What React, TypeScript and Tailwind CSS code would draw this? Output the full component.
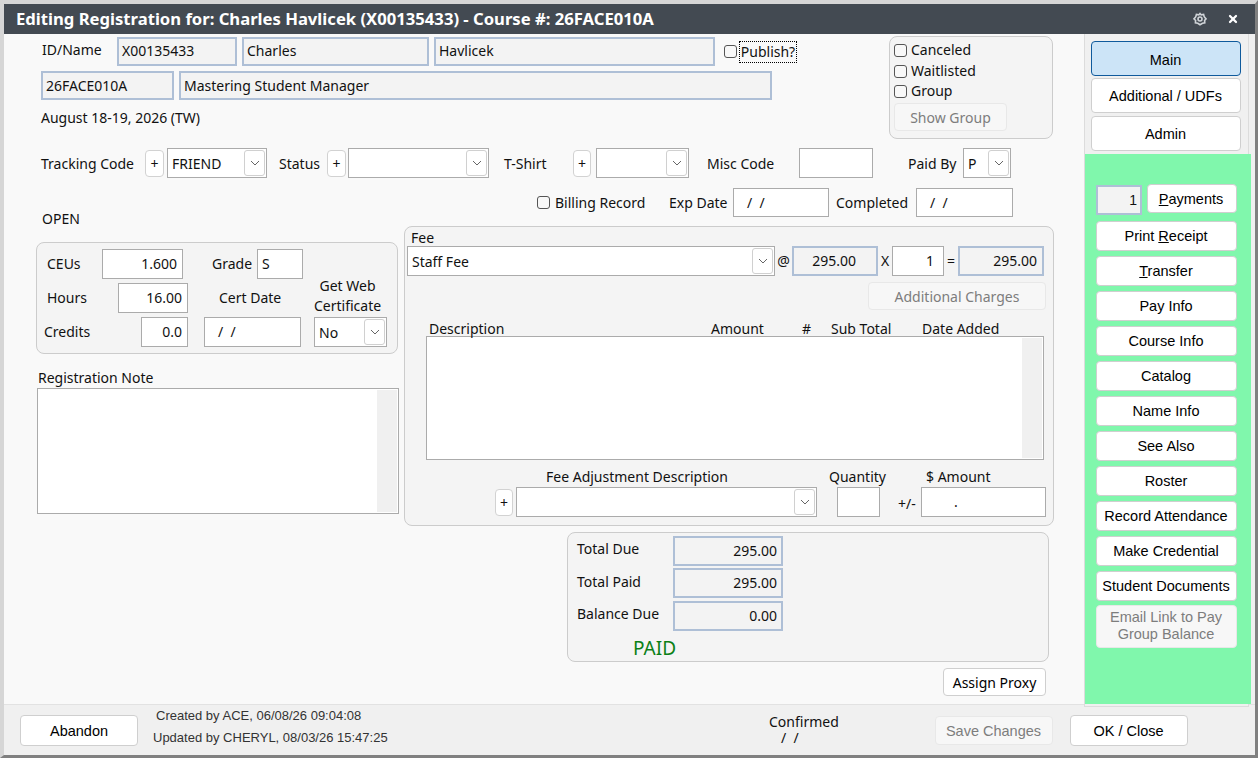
import type { ReactNode } from "react";
import { X } from "lucide-react";

const arial = "font-['Liberation_Sans',Arial,sans-serif]";

function Field({
  className = "",
  height = "h-[30px]",
  locked,
  right,
  children,
}: {
  className?: string;
  height?: string;
  locked?: boolean;
  right?: boolean;
  children?: ReactNode;
}) {
  return (
    <div
      className={`flex shrink-0 items-center whitespace-pre ${height} ${right ? "justify-end" : ""} ${
        locked ? "border-2 border-[#aebfd6] bg-[#f3f3f3] px-[3px]" : "border border-[#ababab] bg-white px-[4px]"
      } ${right && !locked ? "pr-[5px]" : ""} ${className}`}
    >
      {children}
    </div>
  );
}

function Select({ className = "", value }: { className?: string; value?: string }) {
  return (
    <div className={`flex h-[30px] shrink-0 items-center justify-between border border-[#ababab] bg-white pl-[4px] pr-[1px] ${className}`}>
      <span className="pt-[1px]">{value}</span>
      <div className="flex h-[26px] w-[21px] items-center justify-center rounded-[3px] border border-[#d0d0d0] bg-white">
        <svg width="10" height="6" viewBox="0 0 10 6" fill="none" stroke="#666" strokeWidth="1">
          <path d="M1 1l4 4 4-4" />
        </svg>
      </div>
    </div>
  );
}

function Plus({ className = "w-[19px]" }: { className?: string }) {
  return (
    <div className={`mt-[1px] flex h-[27px] shrink-0 items-center justify-center rounded-[4px] border border-[#d2d2d2] bg-white ${className}`}>+</div>
  );
}

function Check() {
  return <div className="h-[13px] w-[13px] shrink-0 rounded-[3px] border border-[#555] bg-[#f8f8f8]" />;
}

function Btn({
  className = "",
  disabled,
  active,
  children,
}: {
  className?: string;
  disabled?: boolean;
  active?: boolean;
  children: ReactNode;
}) {
  const look = active
    ? "border-[#0f5a9c] bg-[#cce4f7] text-black"
    : disabled
      ? "border-[#e8e8e8] bg-[#f7f7f7] text-[#7d7d7d]"
      : "border-[#cfcfcf] bg-white text-black";
  return <div className={`flex shrink-0 items-center justify-center rounded-[4px] border text-center ${look} ${className}`}>{children}</div>;
}

function SideBtn({ children, disabled, className = "h-[30px]" }: { children: ReactNode; disabled?: boolean; className?: string }) {
  return (
    <Btn disabled={disabled} className={`w-[141px] pr-[1px] ${arial} text-[14.5px] leading-[17px] ${className}`}>
      {children}
    </Btn>
  );
}

function Scrollbar() {
  return <div className="h-full w-[20px] bg-[#f0f0f0]" />;
}

export default function App() {
  const sideButtons = ["Pay Info", "Course Info", "Catalog", "Name Info", "See Also", "Roster", "Record Attendance", "Make Credential", "Student Documents"];

  return (
    <div className="flex h-[758px] w-[1258px] flex-col overflow-hidden border-b-[3px] border-l-4 border-r-[3px] border-t-4 border-b-[#808080] border-l-[#d6d6d6] border-r-[#808080] border-t-[#d6d6d6] bg-[#f0f0f0] font-['Noto_Sans',sans-serif] text-[14px] leading-[20px] text-[#111]">
      {/* title bar */}
      <div className="flex h-[30px] shrink-0 items-center justify-between bg-[#434a52] pl-[12px] pr-[16px] text-white">
        <span className="text-[16.65px] font-bold">Editing Registration for: Charles Havlicek (X00135433) - Course #: 26FACE010A</span>
        <div className="flex items-center gap-[20px]">
          <svg width="14" height="14" viewBox="0 0 14 14" fill="none" stroke="#d0d4d8" strokeWidth="1.6">
            <path d="M7 1.5l1.2 1.4 2.4-.4.6 2.2L13 6.9l-1.4 1.6.2 2.3-2.3.5L7 12.7l-2.2-1.4-2.4-.5.2-2.3L1 6.9l1.8-2.2.6-2.2 2.4.4z" />
            <circle cx="7" cy="7" r="2" />
          </svg>
          <X size={12} strokeWidth={4.5} />
        </div>
      </div>

      <div className="flex h-[670px] shrink-0">
        {/* form */}
        <div className="w-[1080px] shrink-0 bg-[#f9f9f9] pt-[2px]">
          <div className="flex h-[103px]">
            <div className="w-[885px] shrink-0">
              <div className="mt-[1px] flex items-center">
                <span className="w-[113px] pb-[4px] pl-[38px]">ID/Name</span>
                <Field locked height="h-[29px]" className="w-[120px] pb-[1px]">X00135433</Field>
                <Field locked height="h-[29px]" className="ml-[5px] w-[187px] pb-[1px]">Charles</Field>
                <Field locked height="h-[29px]" className="ml-[5px] w-[281px] pb-[1px]">Havlicek</Field>
                <div className="ml-[9px]"><Check /></div>
                <div className="ml-[2px] flex h-[22px] w-[58px] items-center justify-center border border-dotted border-black">Publish?</div>
              </div>
              <div className="mt-[5px] flex pl-[37px]">
                <Field locked height="h-[29px]" className="w-[133px]">26FACE010A</Field>
                <Field locked height="h-[29px]" className="ml-[5px] w-[593px]">Mastering Student Manager</Field>
              </div>
              <div className="mt-[8px] pl-[37px]">August 18-19, 2026 (TW)</div>
            </div>
            <div className="h-[103px] w-[164px] shrink-0 rounded-lg border border-[#cccccc] bg-[#f4f4f4] pl-[4px] pt-[3px]">
              <div className="flex h-[20px] items-center gap-[4px]"><Check /><span>Canceled</span></div>
              <div className="mt-[1px] flex h-[20px] items-center gap-[4px]"><Check /><span>Waitlisted</span></div>
              <div className="flex h-[20px] items-center gap-[4px]"><Check /><span>Group</span></div>
              <Btn disabled className="mt-[2px] h-[28px] w-[113px] pt-[1px]">Show Group</Btn>
            </div>
          </div>

          <div className="mt-[9px] flex items-center pl-[37px]">
            <span className="w-[104px] pt-[1px]">Tracking Code</span>
            <Plus />
            <Select value="FRIEND" className="ml-[3px] w-[100px]" />
            <span className="ml-[12px] w-[48px] pt-[1px]">Status</span>
            <Plus />
            <Select className="ml-[2px] w-[141px]" />
            <span className="ml-[15px] w-[69px] pt-[1px]">T-Shirt</span>
            <Plus className="w-[18px]" />
            <Select className="ml-[5px] w-[93px]" />
            <span className="ml-[18px] w-[92px] pt-[1px]">Misc Code</span>
            <Field className="w-[74px]" />
            <span className="ml-[35px] w-[55px] pt-[1px]">Paid By</span>
            <Select value="P" className="w-[48px]" />
          </div>

          <div className="mt-[10px] flex items-center pl-[533px]">
            <Check />
            <span className="ml-[5px] w-[114px] pt-[1px]">Billing Record</span>
            <span className="w-[64px]">Exp Date</span>
            <Field height="h-[29px]" className="w-[96px] pl-[13px]">/  /</Field>
            <span className="ml-[7px] w-[80px]">Completed</span>
            <Field height="h-[29px]" className="w-[97px] pl-[13px]">/  /</Field>
          </div>

          <div className="flex">
            {/* left column */}
            <div className="w-[400px] shrink-0">
              <div className="-mt-[8px] h-[20px] pl-[38px]">OPEN</div>
              <div className="ml-[32px] mt-[13px] flex h-[112px] w-[362px] rounded-lg border border-[#cccccc] bg-[#f4f4f4] py-[6px]">
                <div className="w-[277px] shrink-0">
                  <div className="flex items-center">
                    <span className="ml-[10px] w-[55px]">CEUs</span>
                    <Field right className="w-[81px]">1.600</Field>
                    <span className="ml-[29px] w-[45px]">Grade</span>
                    <Field className="w-[46px]">S</Field>
                  </div>
                  <div className="mt-[4px] flex items-center">
                    <span className="ml-[10px] w-[71px]">Hours</span>
                    <Field right className="w-[70px]">16.00</Field>
                    <span className="ml-[31px]">Cert Date</span>
                  </div>
                  <div className="mt-[4px] flex items-center">
                    <span className="ml-[7px] w-[97px]">Credits</span>
                    <Field right className="w-[47px]">0.0</Field>
                    <Field className="ml-[16px] w-[97px] pl-[13px]">/  /</Field>
                  </div>
                </div>
                <div className="flex w-[73px] shrink-0 flex-col justify-end">
                  <div className="mb-[1px] whitespace-nowrap pr-[6px] text-center">Get Web<br />Certificate</div>
                  <Select value="No" className="w-[73px]" />
                </div>
              </div>
              <div className="ml-[34px] mt-[14px] h-[20px]">Registration Note</div>
              <div className="ml-[33px] flex h-[126px] w-[362px] justify-end border border-[#ababab] bg-white p-[1px]">
                <Scrollbar />
              </div>
            </div>

            {/* right column */}
            <div className="w-[650px] shrink-0 pt-[9px]">
              <div className="h-[300px] w-[650px] rounded-lg border border-[#cccccc] bg-[#f4f4f4]">
                <div className="mt-[1px] h-[18px] pl-[6px]">Fee</div>
                <div className="flex items-center pl-[2px]">
                  <Select value="Staff Fee" className="w-[368px]" />
                  <span className="w-[17px] text-center">@</span>
                  <Field locked right className="w-[86px] pr-[20px]">295.00</Field>
                  <span className="w-[14px] text-center">X</span>
                  <Field right className="w-[52px] pr-[9px]">1</Field>
                  <span className="w-[14px] text-center">=</span>
                  <Field locked right className="w-[86px] pr-[5px]">295.00</Field>
                </div>
                <Btn disabled className="ml-[463px] mt-[6px] h-[28px] w-[178px] pt-[1px]">Additional Charges</Btn>
                <div className="mt-[9px] flex h-[17px] whitespace-nowrap pl-[24px]">
                  <span className="w-[282px]">Description</span>
                  <span className="w-[91px]">Amount</span>
                  <span className="w-[29px]">#</span>
                  <span className="w-[91px]">Sub Total</span>
                  <span>Date Added</span>
                </div>
                <div className="ml-[21px] flex h-[124px] w-[618px] justify-end border border-[#ababab] bg-white p-[1px]">
                  <Scrollbar />
                </div>
                <div className="mt-[7px] flex h-[20px] whitespace-nowrap pl-[141px]">
                  <span className="w-[283px]">Fee Adjustment Description</span>
                  <span className="w-[97px]">Quantity</span>
                  <span>$ Amount</span>
                </div>
                <div className="flex items-center pl-[90px]">
                  <Plus className="w-[18px]" />
                  <Select className="ml-[3px] w-[301px]" />
                  <Field className="ml-[20px] w-[43px]" />
                  <span className="ml-[18px] w-[23px] pt-[4px]">+/-</span>
                  <Field className="w-[125px] pl-[32px]">.</Field>
                </div>
              </div>

              <div className="ml-[163px] mt-[6px] h-[130px] w-[482px] rounded-lg border border-[#cccccc] bg-[#f4f4f4] pt-[3px]">
                <div className="flex items-center">
                  <span className="ml-[9px] w-[96px] pb-[4px]">Total Due</span>
                  <Field locked right className="w-[110px] pr-[4px]">295.00</Field>
                </div>
                <div className="mt-[2px] flex items-center">
                  <span className="ml-[9px] w-[96px] pb-[2px]">Total Paid</span>
                  <Field locked right className="w-[110px] pr-[4px]">295.00</Field>
                </div>
                <div className="mt-[3px] flex items-center">
                  <span className="ml-[9px] w-[96px] pb-[4px]">Balance Due</span>
                  <Field locked right className="w-[110px] pr-[4px]">0.00</Field>
                </div>
                <div className="ml-[65px] mt-[5px] text-[19px] leading-[24px] text-[#0b8017]">PAID</div>
              </div>

              <Btn className="ml-[539px] mt-[6px] h-[28px] w-[103px] pt-[1px]">Assign Proxy</Btn>
            </div>
          </div>
        </div>

        {/* side panel */}
        <div className="relative z-10 h-[673px] w-[165px] shrink-0 border-x border-b border-[#dcdcdc] bg-[#f0f0f0] pt-[7px]">
          <div className={`flex flex-col pl-[6px] ${arial} text-[14.5px]`}>
            <Btn active className="h-[35px] w-[150px] pr-[1px] pt-[2px]">Main</Btn>
            <Btn className="mt-[2px] h-[35px] w-[150px] pr-[1px]">Additional / UDFs</Btn>
            <Btn className="mt-[3px] h-[35px] w-[150px] pr-[1px]">Admin</Btn>
          </div>
          <div className="mt-[3px] h-[550px] w-[166px] bg-[#80f7ac] pl-[11px] pt-[30px]">
            <div className="flex items-start">
              <Field locked right className={`mt-[1px] w-[46px] ${arial}`}>1</Field>
              <Btn className={`ml-[5px] h-[29px] w-[90px] pr-[2px] ${arial} text-[14.5px]`}><span><u>P</u>ayments</span></Btn>
            </div>
            <div className="mt-[6px] flex flex-col gap-[5px]">
              <SideBtn><span>Print <u>R</u>eceipt</span></SideBtn>
              <SideBtn><span><u>T</u>ransfer</span></SideBtn>
              {sideButtons.map((label) => (
                <SideBtn key={label}>{label}</SideBtn>
              ))}
              <SideBtn disabled className="-mt-[1px] h-[43px] pb-[2px]">Email Link to Pay<br />Group Balance</SideBtn>
            </div>
          </div>
        </div>
      </div>

      {/* footer */}
      <div className="flex h-[51px] shrink-0 border-t border-[#e2e2e2] bg-[#f0f0f0]">
        <Btn className={`ml-[16px] mt-[10px] h-[31px] w-[118px] ${arial} text-[14.5px]`}>Abandon</Btn>
        <div className={`ml-[15px] w-[616px] shrink-0 ${arial} text-[13px] leading-[21px] text-[#333]`}>
          <div className="pl-[3px]">Created by ACE, 06/08/26 09:04:08</div>
          <div className="mt-[1px]">Updated by CHERYL, 08/03/26 15:47:25</div>
        </div>
        <div className="w-[166px] shrink-0 pt-[9px] leading-[16px]">
          <div>Confirmed</div>
          <div className="whitespace-pre pl-[12px]">/  /</div>
        </div>
        <Btn disabled className={`mt-[11px] h-[29px] w-[118px] pr-[1px] ${arial} text-[14.5px]`}>Save Changes</Btn>
        <Btn className={`ml-[17px] mt-[10px] h-[31px] w-[118px] pr-[1px] ${arial} text-[14.5px]`}>OK / Close</Btn>
      </div>
    </div>
  );
}
